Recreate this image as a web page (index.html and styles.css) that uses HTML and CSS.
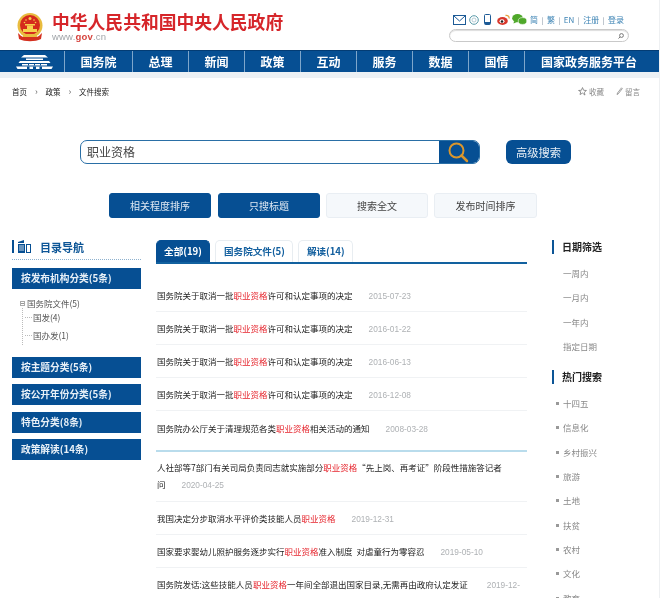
FILE: index.html
```html
<!DOCTYPE html>
<html lang="zh-CN">
<head>
<meta charset="utf-8">
<title>文件搜索</title>
<link rel="stylesheet" href="styles.css">
</head>
<body>
<div class="page">
  <header class="top">
    <div class="brand">
      <svg class="emblem" width="28" height="29" viewBox="0 0 28 29">
        <circle cx="14" cy="12.500" r="12.500" fill="#e9bc3f"/>
        <circle cx="14" cy="12" r="10" fill="#d52a1c"/>
        <g fill="#f6d04d"><circle cx="14" cy="5.500" r="1.500"/><circle cx="10" cy="7" r=".8"/><circle cx="18" cy="7" r=".8"/><circle cx="8.500" cy="9.500" r=".8"/><circle cx="19.500" cy="9.500" r=".8"/><path d="M9 11h10v1.500H9z"/><path d="M7 16h14v3H7z"/><path d="M11 12.500h6V16h-6z"/></g>
        <path d="M2 20c2 2 3 3 5 4h14c2-1 3-2 5-4l-1 6c-6 3-16 3-22 0z" fill="#d4301f"/>
        <path d="M7 21h14v3H7z" fill="#e9bc3f"/>
      </svg>
      <div class="brand-text">
        <div class="brand-name">中华人民共和国中央人民政府</div>
        <div class="brand-url">www.<b>gov</b>.cn</div>
      </div>
    </div>
    <div class="tools">
      <div class="tool-links">
        <svg class="ic-mail" width="13" height="10" viewBox="0 0 13 10"><rect x=".5" y=".5" width="12" height="9" fill="none" stroke="#1c5a96"/><path d="M1 1l5.500 5L12 1" fill="none" stroke="#1c5a96"/></svg>
        <svg class="ic-msg" width="10" height="10" viewBox="0 0 10 10"><circle cx="5" cy="5" r="4.300" fill="none" stroke="#5a9aa8"/><circle cx="5" cy="5" r="2" fill="none" stroke="#9ab8c4" stroke-width=".7"/></svg>
        <svg class="ic-phone" width="7" height="11" viewBox="0 0 7 11"><rect x=".5" y=".5" width="6" height="10" rx="1" fill="none" stroke="#1c5a96"/><rect x="1" y="8" width="5" height="2.500" fill="#1c5a96"/></svg>
        <svg class="ic-weibo" width="13" height="11" viewBox="0 0 13 11"><ellipse cx="5.500" cy="7" rx="5.300" ry="3.900" fill="#d8382c"/><ellipse cx="5" cy="7.300" rx="2.500" ry="2" fill="#fff"/><circle cx="5" cy="7.500" r="1.300" fill="#222"/><path d="M8.500 1.500c2-.5 4 1 3.500 3" fill="none" stroke="#e8a03c" stroke-width="1.300"/></svg>
        <svg class="ic-wechat" width="15" height="11" viewBox="0 0 15 11"><ellipse cx="5.500" cy="4.200" rx="5.300" ry="4.100" fill="#4fa82a"/><path d="M2 7l-.5 2.500L5 8z" fill="#4fa82a"/><ellipse cx="10.500" cy="7" rx="4.300" ry="3.400" fill="#4fa82a" stroke="#fff" stroke-width=".6"/></svg>
        <span class="langs"><span>简</span><i>|</i><span>繁</span><i>|</i><span>EN</span><i>|</i><span>注册</span><i>|</i><span>登录</span></span>
      </div>
      <div class="mini-search">
        <svg width="6" height="6" viewBox="0 0 6 6"><circle cx="3.500" cy="2.500" r="1.900" fill="none" stroke="#777"/><path d="M2 4L.5 5.500" stroke="#777"/></svg>
      </div>
    </div>
  </header>

  <nav class="nav">
    <a class="nav-home"><svg width="37" height="16" viewBox="0 0 37 16"><g fill="#fff"><path d="M8 1h21l3 2.500H5z"/><path d="M10 4.500h17v1.500H10z"/><path d="M4 7h29l1.500 2H2.500z"/><path d="M6 10h25v1.500H6z"/><path d="M0 12.500h37l-1.500 2.500h-34z"/></g><path d="M11 12.500h2.500V15H11zM17 12.500h3V15h-3zM23.500 12.500H26V15h-2.500zM12 10h1v1.500h-1zM18 10h1v1.500h-1zM24 10h1v1.500h-1z" fill="#064f93"/></svg></a>
    <a class="w68">国务院</a>
    <a class="w56">总理</a>
    <a class="w56">新闻</a>
    <a class="w56">政策</a>
    <a class="w56">互动</a>
    <a class="w56">服务</a>
    <a class="w56">数据</a>
    <a class="w56">国情</a>
    <a class="nav-last">国家政务服务平台</a>
  </nav>
  <div class="strip"></div>

  <div class="crumbs">
    <div class="crumb-path"><span>首页</span><em>›</em><span>政策</span><em>›</em><span>文件搜索</span></div>
    <div class="crumb-acts">
      <span class="act"><svg width="9" height="9" viewBox="0 0 8 8"><path d="M4 .5l1 2.400 2.500.2-1.900 1.600.6 2.500L4 5.400 1.800 6.700l.6-2.500L.5 3.100 3 2.900z" fill="none" stroke="#777" stroke-width=".7"/></svg>收藏</span>
      <span class="act"><svg width="7" height="8" viewBox="0 0 7 8"><path d="M5.500.8L1.500 6 1 7.500 2.300 6.800 6.300 1.600z" fill="none" stroke="#777" stroke-width=".7"/></svg>留言</span>
    </div>
  </div>

  <section class="search">
    <div class="search-row">
      <div class="search-box">
        <div class="search-input">职业资格</div>
        <div class="search-btn"><svg width="22" height="22" viewBox="0 0 22 22"><circle cx="9.500" cy="9.500" r="7" fill="none" stroke="#d9962d" stroke-width="2"/><path d="M14.500 14.500l5.500 5.500" stroke="#d9962d" stroke-width="2.500" stroke-linecap="round"/></svg></div>
      </div>
      <div class="adv">高级搜索</div>
    </div>
    <div class="filters">
      <div class="fbtn on">相关程度排序</div>
      <div class="fbtn on">只搜标题</div>
      <div class="fbtn">搜索全文</div>
      <div class="fbtn wide">发布时间排序</div>
    </div>
  </section>

  <div class="main">
    <aside class="left">
      <div class="left-title">
        <svg width="19" height="13" viewBox="0 0 19 13"><path d="M0 0h2v13H0z" fill="#064f93"/><path d="M6 2l6-2v3H6zM6 4h7v9H6z" fill="#064f93"/><path d="M7 6h5M7 8h5M7 10h5" stroke="#fff" stroke-width=".8"/><rect x="14.500" y="4.500" width="4" height="8" fill="none" stroke="#064f93"/></svg>
        <span>目录导航</span>
      </div>
      <div class="bar">按发布机构分类(5条)</div>
      <ul class="tree">
        <li class="tree-root"><i class="box"></i>国务院文件(5)</li>
        <li class="tree-leaf">国发(4)</li>
        <li class="tree-leaf">国办发(1)</li>
      </ul>
      <div class="bars">
        <div class="bar">按主题分类(5条)</div>
        <div class="bar">按公开年份分类(5条)</div>
        <div class="bar">特色分类(8条)</div>
        <div class="bar">政策解读(14条)</div>
      </div>
    </aside>

    <div class="center">
      <div class="tabs">
        <div class="tab on">全部(19)</div>
        <div class="tab">国务院文件(5)</div>
        <div class="tab">解读(14)</div>
      </div>
      <ul class="results first">
        <li>国务院关于取消一批<b>职业资格</b>许可和认定事项的决定<time>2015-07-23</time></li>
        <li>国务院关于取消一批<b>职业资格</b>许可和认定事项的决定<time>2016-01-22</time></li>
        <li>国务院关于取消一批<b>职业资格</b>许可和认定事项的决定<time>2016-06-13</time></li>
        <li>国务院关于取消一批<b>职业资格</b>许可和认定事项的决定<time>2016-12-08</time></li>
        <li>国务院办公厅关于清理规范各类<b>职业资格</b>相关活动的通知<time>2008-03-28</time></li>
      </ul>
      <div class="divider"></div>
      <ul class="results second">
        <li class="wrap"><span class="line">人社部等7部门有关司局负责同志就实施部分<b>职业资格</b>“先上岗、再考证”阶段性措施答记者</span><span class="line">问<time>2020-04-25</time></span></li>
        <li>我国决定分步取消水平评价类技能人员<b>职业资格</b><time>2019-12-31</time></li>
        <li class="spaced">国家要求婴幼儿照护服务逐步实行<b>职业资格</b>准入制度 对虐童行为零容忍<time>2019-05-10</time></li>
        <li class="tail">国务院发话:这些技能人员<b>职业资格</b>一年间全部退出国家目录,无需再由政府认定发证<time>2019-12-</time></li>
      </ul>
    </div>

    <aside class="right">
      <h3 class="side-title">日期筛选</h3>
      <ul class="dates">
        <li>一周内</li><li>一月内</li><li>一年内</li><li>指定日期</li>
      </ul>
      <h3 class="side-title hot-title">热门搜索</h3>
      <ul class="hot">
        <li>十四五</li><li>信息化</li><li>乡村振兴</li><li>旅游</li><li>土地</li><li>扶贫</li><li>农村</li><li>文化</li><li>教育</li>
      </ul>
    </aside>
  </div>
</div>
</body>
</html>
```
FILE: styles.css
```css
* { box-sizing: border-box; }
html, body { margin: 0; padding: 0; height: 100%; overflow: hidden; background: #fff; }
body { font-family: "Noto Sans CJK SC", "Liberation Sans", sans-serif; color: #333; }
ul { list-style: none; margin: 0; padding: 0; }
.page { width: 660px; height: 598px; overflow: hidden; border-right: 1px solid #eef0f2; filter: blur(.3px); }

.top { height: 50px; display: flex; justify-content: space-between; }
.brand { display: flex; padding: 11px 0 0 16px; }
.emblem { margin-top: 2px; }
.brand-text { margin-left: 8px; }
.brand-name { font-size: 17.800px; line-height: 20px; height: 20px; font-weight: 700; color: #d6262a; white-space: nowrap; }
.brand-url { font: 9.500px/12px "Liberation Sans", sans-serif; color: #a2a6aa; letter-spacing: .2px; }
.brand-url b { color: #d6453f; }
.tools { width: 180px; margin-right: 30px; padding-top: 13px; }
.tool-links { display: flex; align-items: center; height: 13px; padding-left: 4px; white-space: nowrap; }
.ic-msg { margin-left: 3px; }
.ic-phone { margin-left: 5px; }
.ic-weibo { margin-left: 6px; }
.ic-wechat { margin-left: 2px; }
.langs { display: flex; align-items: center; gap: 3.500px; margin-left: 3px; font-size: 8px; color: #3c83b4; }
.langs i { font-style: normal; color: #789; font-size: 7px; }
.mini-search { height: 13px; margin-top: 3px; border: 1px solid #c9c9c9; border-radius: 7px; box-shadow: inset 0 1px 1px #ddd; display: flex; justify-content: flex-end; align-items: center; padding-right: 4px; }

.nav { height: 22px; background: #064f93; border-top: 1px solid #033c74; display: flex; color: #fff; font-size: 12px; font-weight: 700; line-height: 21px; text-align: center; }
.nav a { border-left: 1px solid #7ea6cb; }
.nav .nav-home { width: 64px; border-left: 0; display: flex; justify-content: center; align-items: center; padding-left: 4px; }
.w68 { width: 68px; }
.w56 { width: 56px; }
.nav .nav-last { flex: 1; padding-right: 6px; }
.strip { height: 6px; background: #ecf1f5; }

.crumbs { height: 26px; display: flex; justify-content: space-between; align-items: center; font-size: 7.500px; padding: 0 19px 0 12px; }
.crumb-path { display: flex; align-items: center; color: #222; }
.crumb-path em { font-style: normal; color: #666; width: 18.500px; text-align: center; font-size: 9px; }
.crumb-acts { display: flex; gap: 12px; color: #888; }
.act { display: flex; align-items: center; gap: 2px; }

.search { height: 135px; padding-top: 36px; }
.search-row { display: flex; padding-left: 80px; }
.search-box { width: 400px; height: 24px; display: flex; border: 1px solid #2a6fa6; border-radius: 7px; overflow: hidden; }
.search-input { flex: 1; font-size: 12px; line-height: 22px; padding-left: 6px; color: #444; }
.search-btn { width: 40px; background: #064f93; display: flex; justify-content: center; align-items: center; padding-right: 3px; }
.adv { width: 65px; height: 24px; margin-left: 26px; background: #064f93; border-radius: 6px; color: #e6eef5; font-size: 11.300px; line-height: 24px; text-align: center; }
.filters { display: flex; gap: 6px; padding-left: 109px; margin-top: 29px; }
.fbtn { width: 102px; height: 25px; background: #f5f8fb; border: 1px solid #e9eef3; border-radius: 3px; font-size: 10px; line-height: 23px; text-align: center; color: #444; }
.fbtn.on { background: #064f93; border-color: #064f93; color: #dfe9f3; }
.fbtn.on + .fbtn.on { margin-left: 1px; }
.fbtn.wide { width: 103px; }

.main { display: flex; }
.left { width: 129px; margin-left: 12px; }
.left-title { height: 21px; padding-top: 1px; display: flex; align-items: flex-start; gap: 9px; border-bottom: 1px dotted #8fb2cf; font-size: 11px; line-height: 15px; font-weight: 700; color: #0c5596; }
.bar { height: 21px; margin-top: 6.300px; background: #064f93; color: #e8f0f7; font-size: 9.700px; line-height: 21px; font-weight: 700; padding-left: 9px; white-space: nowrap; }
.left-title + .bar { margin-top: 8px; }
.tree { height: 68px; padding: 8px 0 0 8px; font-size: 8.500px; color: #555; line-height: 13px; position: relative; }
.tree::before { content: ""; position: absolute; left: 10px; top: 19px; height: 37px; border-left: 1px dotted #bbb; }
.tree-root { display: flex; align-items: center; }
.box { width: 5px; height: 5px; border: 1px solid #aaa; margin-right: 2px; background: linear-gradient(#999, #999) center / 3px 1px no-repeat; }
.tree-leaf { margin-left: 13px; height: 17px; margin-top: 1px; position: relative; }
.tree-leaf::before { content: ""; position: absolute; left: -8px; top: 6px; width: 7px; border-top: 1px dotted #bbb; }
.bars .bar:first-child { margin-top: 0; }

.center { width: 371px; margin-left: 15px; padding-top: 1px; }
.tabs { display: flex; gap: 5px; border-bottom: 2px solid #12619f; height: 24px; }
.tab { height: 22px; padding: 0 7px 0 8px; background: #fff; border: 1px solid #e8edf1; border-bottom: 0; border-radius: 5px 5px 0 0; color: #14609f; font-size: 9.600px; line-height: 21px; font-weight: 700; }
.tab.on { width: 54px; background: #064f93; border-color: #064f93; color: #fff; padding: 0; text-align: center; }
.results.first { padding-top: 15px; }
.results li { height: 33px; line-height: 33px; font-size: 8.500px; color: #222; padding-left: 1px; white-space: nowrap; border-bottom: 1px solid #f0f2f4; }
.results.first li:last-child { border-bottom: 0; height: 37px; line-height: 35px; }
.results b { color: #e6262e; font-weight: 400; }
.results time { font: 8.300px "Liberation Sans", sans-serif; color: #aeb1b4; margin-left: 16px; }
.results .spaced { word-spacing: 2px; }
.results .tail time { margin-left: 19px; }
.divider { height: 2px; background: #b9dcec; margin-top: 2px; }
.results .wrap { height: 50px; padding-top: 7px; line-height: 17px; }
.line { display: block; }

.right { margin-left: 25px; width: 100px; padding-top: 1px; }
.side-title { margin: 0; height: 14px; border-left: 2px solid #0c5596; padding-left: 8px; font-size: 10px; line-height: 14px; font-weight: 700; color: #222; }
.dates { padding: 7px 0 0 11px; font-size: 8.500px; color: #888; }
.dates li { height: 24.300px; line-height: 24px; }
.hot-title { margin-top: 12px; }
.hot { padding: 7px 0 0 11px; font-size: 8.500px; color: #888; }
.hot li { height: 24.300px; line-height: 24px; position: relative; }
.hot li::before { content: ""; position: absolute; left: -7px; top: 11px; width: 3px; height: 3px; background: #999; }
```
